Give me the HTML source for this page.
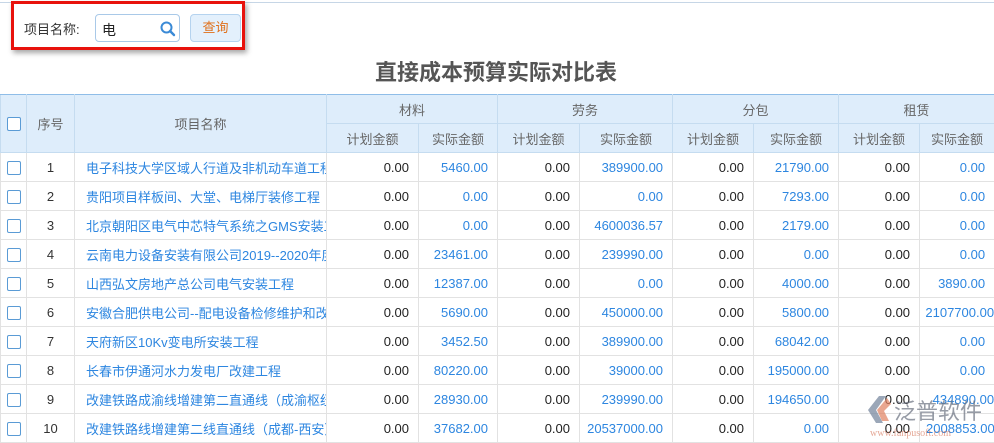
<!DOCTYPE html>
<html><head><meta charset="utf-8">
<style>
*{margin:0;padding:0;box-sizing:border-box}
body{width:994px;height:439px;overflow:hidden;background:#fff;font-family:"Liberation Sans","Noto Sans CJK SC",sans-serif;font-size:13px;color:#333;position:relative}
.topline{position:absolute;left:0;top:2px;width:994px;height:1px;background:#c6d6e6}
.redbox{position:absolute;left:11px;top:1px;width:234px;height:49px;border:3px solid #e8120c;box-shadow:2px 3px 5px rgba(0,0,0,.35)}
.lbl{position:absolute;left:24px;top:19px;font-size:13px;color:#333}
.inp{position:absolute;left:95px;top:14px;width:85px;height:28px;border:1px solid #a9c9e8;border-radius:4px;background:#fff}
.inp span{position:absolute;left:6px;top:5px;font-size:14px;color:#222}
.inp svg{position:absolute;left:64px;top:6px}
.btn{position:absolute;left:190px;top:14px;width:51px;height:28px;border:1px solid #b5d3ef;border-radius:4px;background:#e3f0fc;color:#e0701a;text-align:center;line-height:26px;font-size:13px}
.title{position:absolute;left:0;width:992px;top:55px;text-align:center;font-size:22px;font-weight:bold;color:#555}
table{position:absolute;left:0;top:94px;border-collapse:collapse;table-layout:fixed;width:994px}
td,th{height:29px;white-space:nowrap;overflow:hidden;font-weight:normal}
th{background:#deedfb;color:#666;border:1px solid #c5dcf0;font-size:13px}
thead tr:first-child th{border-top:1px solid #8fbde8}
td{border:1px solid #e2e2e2;text-align:right;padding-right:9px;font-size:13px;color:#222}
td.b{color:#2d86e0}
td.c{text-align:center;padding:0}
td.n{text-align:center;padding:0;color:#333}
td.t{text-align:left;padding-left:11px;padding-right:0;color:#2d86e0;text-overflow:clip}
.cb{display:inline-block;width:14px;height:14px;border:1px solid #5a9bd5;border-radius:2px;background:#fff;vertical-align:middle}
.wm{position:absolute;left:864px;top:386px;width:130px;height:53px;pointer-events:none}
</style></head><body>
<div class="topline"></div>
<div class="redbox"></div>
<div class="lbl">项目名称:</div>
<div class="inp"><span>电</span>
<svg width="16" height="16" viewBox="0 0 16 16"><circle cx="6.5" cy="6.5" r="5" fill="none" stroke="#3a8ad6" stroke-width="2"/><line x1="10" y1="10" x2="14" y2="14" stroke="#3a8ad6" stroke-width="2.4" stroke-linecap="round"/></svg></div>
<div class="btn">查询</div>
<div class="title">直接成本预算实际对比表</div>
<table>
<colgroup><col style="width:26px"><col style="width:48px"><col style="width:252px"><col style="width:92px"><col style="width:79px"><col style="width:82px"><col style="width:93px"><col style="width:81px"><col style="width:85px"><col style="width:81px"><col style="width:75px"></colgroup>
<thead>
<tr><th rowspan="2"><span class="cb"></span></th><th rowspan="2">序号</th><th rowspan="2">项目名称</th><th colspan="2">材料</th><th colspan="2">劳务</th><th colspan="2">分包</th><th colspan="2">租赁</th></tr>
<tr><th>计划金额</th><th>实际金额</th><th>计划金额</th><th>实际金额</th><th>计划金额</th><th>实际金额</th><th>计划金额</th><th>实际金额</th></tr>
</thead>
<tbody>
<tr><td class="c"><span class="cb"></span></td><td class="n">1</td><td class="t">电子科技大学区域人行道及非机动车道工程</td><td>0.00</td><td class="b">5460.00</td><td>0.00</td><td class="b">389900.00</td><td>0.00</td><td class="b">21790.00</td><td>0.00</td><td class="b">0.00</td></tr>
<tr><td class="c"><span class="cb"></span></td><td class="n">2</td><td class="t">贵阳项目样板间、大堂、电梯厅装修工程</td><td>0.00</td><td class="b">0.00</td><td>0.00</td><td class="b">0.00</td><td>0.00</td><td class="b">7293.00</td><td>0.00</td><td class="b">0.00</td></tr>
<tr><td class="c"><span class="cb"></span></td><td class="n">3</td><td class="t">北京朝阳区电气中芯特气系统之GMS安装工程</td><td>0.00</td><td class="b">0.00</td><td>0.00</td><td class="b">4600036.57</td><td>0.00</td><td class="b">2179.00</td><td>0.00</td><td class="b">0.00</td></tr>
<tr><td class="c"><span class="cb"></span></td><td class="n">4</td><td class="t">云南电力设备安装有限公司2019--2020年度</td><td>0.00</td><td class="b">23461.00</td><td>0.00</td><td class="b">239990.00</td><td>0.00</td><td class="b">0.00</td><td>0.00</td><td class="b">0.00</td></tr>
<tr><td class="c"><span class="cb"></span></td><td class="n">5</td><td class="t">山西弘文房地产总公司电气安装工程</td><td>0.00</td><td class="b">12387.00</td><td>0.00</td><td class="b">0.00</td><td>0.00</td><td class="b">4000.00</td><td>0.00</td><td class="b">3890.00</td></tr>
<tr><td class="c"><span class="cb"></span></td><td class="n">6</td><td class="t">安徽合肥供电公司--配电设备检修维护和改造</td><td>0.00</td><td class="b">5690.00</td><td>0.00</td><td class="b">450000.00</td><td>0.00</td><td class="b">5800.00</td><td>0.00</td><td class="b" style="padding-right:0">2107700.00</td></tr>
<tr><td class="c"><span class="cb"></span></td><td class="n">7</td><td class="t">天府新区10Kv变电所安装工程</td><td>0.00</td><td class="b">3452.50</td><td>0.00</td><td class="b">389900.00</td><td>0.00</td><td class="b">68042.00</td><td>0.00</td><td class="b">0.00</td></tr>
<tr><td class="c"><span class="cb"></span></td><td class="n">8</td><td class="t">长春市伊通河水力发电厂改建工程</td><td>0.00</td><td class="b">80220.00</td><td>0.00</td><td class="b">39000.00</td><td>0.00</td><td class="b">195000.00</td><td>0.00</td><td class="b">0.00</td></tr>
<tr><td class="c"><span class="cb"></span></td><td class="n">9</td><td class="t">改建铁路成渝线增建第二直通线（成渝枢纽）</td><td>0.00</td><td class="b">28930.00</td><td>0.00</td><td class="b">239990.00</td><td>0.00</td><td class="b">194650.00</td><td>0.00</td><td class="b" style="padding-right:0">434890.00</td></tr>
<tr><td class="c"><span class="cb"></span></td><td class="n">10</td><td class="t">改建铁路线增建第二线直通线（成都-西安）</td><td>0.00</td><td class="b">37682.00</td><td>0.00</td><td class="b">20537000.00</td><td>0.00</td><td class="b">0.00</td><td>0.00</td><td class="b" style="padding-right:0;text-align:left;padding-left:6px">2008853.00</td></tr>
</tbody></table>
<svg class="wm" viewBox="0 0 130 53">
<path d="M4 24 L15 10 L22 10 L12 24 L19 37 L12 37 Z" fill="#7a8aa0" opacity=".75"/>
<path d="M13 24 L23 12 L27 18 L20 25 L25 35 L18 35 Z" fill="#e08060" opacity=".7"/>
<text x="30" y="33" font-family="Noto Sans CJK SC,sans-serif" font-size="22" fill="#6a7180" opacity=".7">泛普软件</text>
<text x="6" y="50" font-family="Liberation Serif,serif" font-size="10" fill="#d06040" opacity=".55">www.fanpusoft.com</text>
</svg>
</body></html>
